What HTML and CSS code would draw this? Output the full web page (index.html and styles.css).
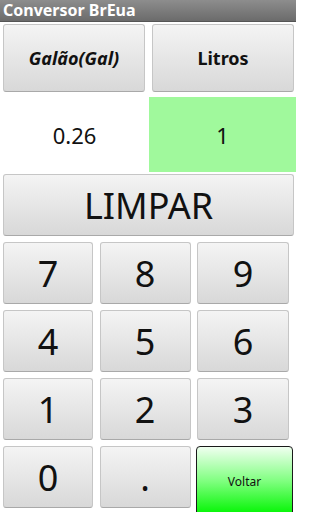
FILE: index.html
```html
<!DOCTYPE html>
<html>
<head>
<meta charset="utf-8">
<link rel="stylesheet" href="styles.css">
</head>
<body>
<div class="app">
  <div class="titlebar">Conversor BrEua</div>
  <div class="units">
    <div class="btn unit italic">Galão(Gal)</div>
    <div class="btn unit">Litros</div>
  </div>
  <div class="display">
    <div class="value">0.26</div>
    <div class="value active">1</div>
  </div>
  <div class="clear-row">
    <div class="btn clear">LIMPAR</div>
  </div>
  <div class="pad">
    <div class="btn key">7</div>
    <div class="btn key">8</div>
    <div class="btn key">9</div>
    <div class="btn key">4</div>
    <div class="btn key">5</div>
    <div class="btn key">6</div>
    <div class="btn key">1</div>
    <div class="btn key">2</div>
    <div class="btn key">3</div>
    <div class="btn key">0</div>
    <div class="btn key">.</div>
    <div class="back">Voltar</div>
  </div>
</div>
</body>
</html>
```
FILE: styles.css
```css
html, body {
  margin: 0;
  padding: 0;
  background: #fff;
}
.app {
  width: 296px;
  height: 512px;
  overflow: hidden;
  font-family: "Noto Sans", "Open Sans", sans-serif;
  color: #000;
  display: flex;
  flex-direction: column;
}
.titlebar {
  height: 22px;
  box-sizing: border-box;
  background: linear-gradient(#8d8d8d, #6b6b6b);
  border-bottom: 1px solid #555;
  color: #fff;
  font-weight: bold;
  font-size: 16px;
  line-height: 20px;
  padding-left: 3px;
}
.btn {
  box-sizing: border-box;
  background: linear-gradient(#f4f4f4, #d8d8d8);
  border: 1px solid #c6c6c6;
  border-bottom-color: #a9a9a9;
  border-radius: 3px;
  display: flex;
  align-items: center;
  justify-content: center;
}
.units {
  height: 75px;
  box-sizing: border-box;
  padding: 2px 2px 5px 3px;
  display: grid;
  grid-template-columns: 1fr 1fr;
  column-gap: 7px;
}
.unit {
  font-weight: bold;
  font-size: 18px;
  color: #111;
}
.italic {
  font-style: italic;
}
.display {
  height: 75px;
  display: grid;
  grid-template-columns: 149px 147px;
}
.value {
  display: flex;
  align-items: center;
  justify-content: center;
  font-size: 22px;
  color: #111;
}
.active {
  background: #a0f99c;
}
.clear-row {
  height: 68px;
  box-sizing: border-box;
  padding: 2px 2px 4px 3px;
  display: flex;
}
.clear {
  flex: 1;
  font-size: 36px;
  color: #111;
}
.pad {
  height: 272px;
  box-sizing: border-box;
  padding: 2px 0 0 3px;
  display: grid;
  grid-template-columns: 90px 91px 92px;
  grid-template-rows: repeat(4, 68px);
  column-gap: 6.5px;
}
.key {
  font-size: 36px;
  margin-bottom: 6px;
  color: #111;
}
.back {
  box-sizing: border-box;
  margin: 0 -4px -2px -1px;
  border: 1px solid #1a1a1a;
  border-radius: 4px;
  background: linear-gradient(#f0fff0, #80ff80 50%, #00f500);
  display: flex;
  align-items: center;
  justify-content: center;
  font-size: 12px;
  color: #111;
}
```
